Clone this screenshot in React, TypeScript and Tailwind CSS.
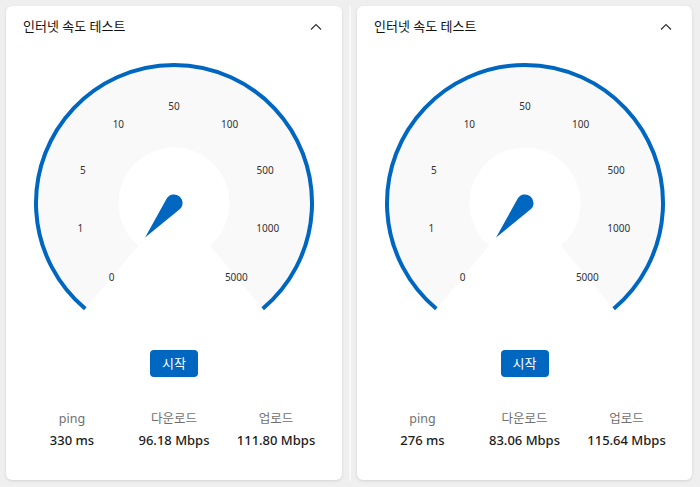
import React from 'react';

type Result = { ping: string; down: string; up: string };

const results: Result[] = [
  { ping: '330 ms', down: '96.18 Mbps', up: '111.80 Mbps' },
  { ping: '276 ms', down: '83.06 Mbps', up: '115.64 Mbps' },
];

const ticks = ['0', '1', '5', '10', '50', '100', '500', '1000', '5000'];

const CX = 168;
const CY = 155;
const SPAN = 140;

function pt(r: number, deg: number) {
  const a = (deg * Math.PI) / 180;
  return [CX + r * Math.sin(a), CY - r * Math.cos(a)];
}

function sectorPath(rOut: number, rIn: number) {
  const [x1, y1] = pt(rOut, -SPAN);
  const [x2, y2] = pt(rOut, SPAN);
  const [x3, y3] = pt(rIn, SPAN);
  const [x4, y4] = pt(rIn, -SPAN);
  return `M ${x1} ${y1} A ${rOut} ${rOut} 0 1 1 ${x2} ${y2} L ${x3} ${y3} A ${rIn} ${rIn} 0 1 0 ${x4} ${y4} Z`;
}

function arcPath(r: number) {
  const [x1, y1] = pt(r, -SPAN);
  const [x2, y2] = pt(r, SPAN);
  return `M ${x1} ${y1} A ${r} ${r} 0 1 1 ${x2} ${y2}`;
}

function Gauge() {
  return (
    <svg width="336" height="264" viewBox="0 0 336 264" className="block">
      <path d={sectorPath(136, 55.5)} fill="#f9f9f9" />
      <path d={arcPath(138)} fill="none" stroke="#0067c0" strokeWidth="4" />
      {ticks.map((t, i) => {
        const [x, y] = pt(97, -SPAN + i * 35);
        return (
          <text
            key={t}
            x={x}
            y={y}
            textAnchor="middle"
            dominantBaseline="central"
            fontSize="10"
            fill="#333"
          >
            {t}
          </text>
        );
      })}
      <g transform={`translate(${CX} ${CY}) rotate(40)`}>
        <path d="M 8.34 1.6 L 0 45 L -8.34 1.6 A 8.5 8.5 0 1 1 8.34 1.6 Z" fill="#0067c0" />
      </g>
    </svg>
  );
}

function SpeedCard({ r, className }: { r: Result; className: string }) {
  return (
    <div className={`flex flex-col h-[474px] bg-white rounded-md shadow-[0_1px_3px_rgba(0,0,0,0.12)] ${className}`}>
      <div className="flex items-center justify-between h-[42px] pl-[17px] pr-[20px]">
        <span className="text-[13px] text-[#111]">인터넷 속도 테스트</span>
        <svg width="12" height="8" viewBox="0 0 12 8">
          <polyline points="1,6.5 6,1.5 11,6.5" fill="none" stroke="#333" strokeWidth="1.2" />
        </svg>
      </div>
      <Gauge />
      <div className="flex justify-center mt-[38px]">
        <button className="h-[27px] w-[48px] rounded bg-[#0067c0] text-white text-[13px]">시작</button>
      </div>
      <div className="grid grid-cols-3 w-[306px] mx-auto mt-[33px] text-center">
        {[
          ['ping', r.ping],
          ['다운로드', r.down],
          ['업로드', r.up],
        ].map(([label, value]) => (
          <div key={label} className="flex flex-col items-center">
            <span className="h-[18px] leading-[18px] text-[12.5px] text-[#707070]">{label}</span>
            <span className="h-[18px] leading-[18px] mt-[3px] text-[13px] font-medium text-[#1b1b1b] whitespace-nowrap">
              {value}
            </span>
          </div>
        ))}
      </div>
    </div>
  );
}

export default function App() {
  return (
    <div className="flex w-[700px] h-[487px] bg-[#efefef] p-[6px] font-['Noto_Sans','Noto_Sans_CJK_KR',sans-serif]">
      <SpeedCard r={results[0]} className="w-[336px]" />
      <div className="flex justify-center w-[15px]">
        <div className="w-[2px] h-full bg-[#f8f8f8]" />
      </div>
      <SpeedCard r={results[1]} className="w-[335px]" />
    </div>
  );
}
